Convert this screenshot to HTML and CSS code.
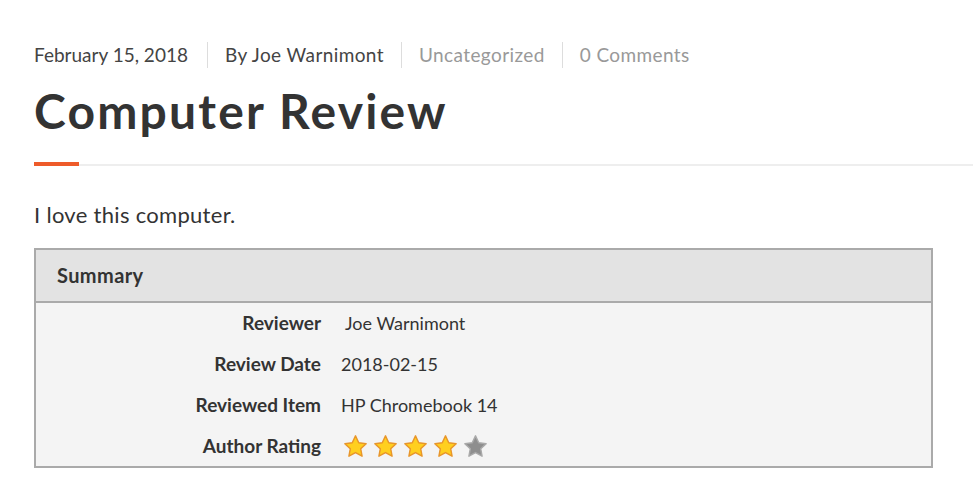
FILE: index.html
```html
<!DOCTYPE html>
<html lang="en">
<head>
<meta charset="UTF-8" />
<title>Computer Review</title>
<link rel="stylesheet" href="styles.css">
</head>
<body>

<article class="post">
  <div class="meta">
    <span class="meta-item">February 15, 2018</span>
    <span class="meta-item">By Joe Warnimont</span>
    <span class="meta-item muted">Uncategorized</span>
    <span class="meta-item muted">0 Comments</span>
  </div>
  <h1 class="title">Computer Review</h1>
  <div class="title-rule"><span class="accent"></span><span class="line"></span></div>

  <p class="intro">I love this computer.</p>

  <div class="summary">
    <div class="summary-head">Summary</div>
    <div class="summary-body">
      <div class="label">Reviewer</div>
      <div class="value">&nbsp;Joe Warnimont</div>
      <div class="label">Review Date</div>
      <div class="value">2018-02-15</div>
      <div class="label">Reviewed Item</div>
      <div class="value">HP Chromebook 14</div>
      <div class="label">Author Rating</div>
      <div class="value stars">
        <svg viewBox="0 0 24 24" class="star on"><path d="M12 1.8l3.1 6.6 7.1.9-5.2 4.9 1.3 7.1L12 17.8l-6.3 3.5 1.3-7.1L1.8 9.3l7.1-.9z"/></svg>
        <svg viewBox="0 0 24 24" class="star on"><path d="M12 1.8l3.1 6.6 7.1.9-5.2 4.9 1.3 7.1L12 17.8l-6.3 3.5 1.3-7.1L1.8 9.3l7.1-.9z"/></svg>
        <svg viewBox="0 0 24 24" class="star on"><path d="M12 1.8l3.1 6.6 7.1.9-5.2 4.9 1.3 7.1L12 17.8l-6.3 3.5 1.3-7.1L1.8 9.3l7.1-.9z"/></svg>
        <svg viewBox="0 0 24 24" class="star on"><path d="M12 1.8l3.1 6.6 7.1.9-5.2 4.9 1.3 7.1L12 17.8l-6.3 3.5 1.3-7.1L1.8 9.3l7.1-.9z"/></svg>
        <svg viewBox="0 0 24 24" class="star off"><path d="M12 1.8l3.1 6.6 7.1.9-5.2 4.9 1.3 7.1L12 17.8l-6.3 3.5 1.3-7.1L1.8 9.3l7.1-.9z"/></svg>
      </div>
    </div>
  </div>
</article>

</body>
</html>
```

FILE: styles.css
```css
body {
  margin: 0;
  background: #fff;
  color: #333;
  font-family: 'Lato', 'Open Sans', sans-serif;
}
.post {
  padding-left: 34px;
}

/* meta line */
.meta {
  display: flex;
  margin-top: 42px;
  font-size: 19px;
  color: #444;
}
.meta-item {
  line-height: 26px;
  padding: 0 17px;
  border-left: 1px solid #ddd;
  letter-spacing: 0.4px;
}
.meta-item:first-child {
  padding-left: 0;
  padding-right: 19px;
  border-left: 0;
  letter-spacing: 0;
}
.meta-item.muted {
  color: #999;
}

.title {
  margin: 14px 0 0;
  font-size: 48px;
  line-height: 58px;
  font-weight: 700;
  color: #333;
  letter-spacing: 2.2px;
}

.title-rule {
  display: flex;
  align-items: flex-end;
  margin-top: 22px;
}
.title-rule .accent {
  width: 45px;
  height: 4px;
  background: #ee5b2a;
}
.title-rule .line {
  flex: 1;
  height: 2px;
  background: #eee;
}

.intro {
  margin: 36px 0 0;
  font-size: 22px;
  line-height: 26px;
  letter-spacing: 0.3px;
  color: #333;
}

/* summary box */
.summary {
  margin: 20px 40px 0 0;
  border: 2px solid #aaa;
  background: #f4f4f4;
}
.summary-head {
  background: #e3e3e3;
  border-bottom: 2px solid #aaa;
  height: 51px;
  line-height: 50px;
  padding-left: 21px;
  font-size: 20px;
  letter-spacing: 0.4px;
  font-weight: 700;
}
.summary-body {
  display: grid;
  grid-template-columns: 285px 1fr;
  grid-auto-rows: 41px;
  column-gap: 20px;
  align-items: center;
  font-size: 18px;
  margin-bottom: -1px;
}
.label,
.value {
  padding-bottom: 2px;
}
.label {
  text-align: right;
  font-weight: 700;
  font-size: 19px;
}
.value {
  color: #333;
}
.stars {
  display: flex;
  gap: 5px;
  padding-left: 2px;
  padding-bottom: 0;
}
.star {
  width: 25px;
  height: 25px;
}
.star.on path {
  fill: #ffcf1f;
  stroke: #e8962a;
  stroke-width: 1.4;
  stroke-linejoin: round;
}
.star.off path {
  fill: #8e8e8e;
  stroke: #a9a9a9;
  stroke-width: 1.4;
  stroke-linejoin: round;
}
```
